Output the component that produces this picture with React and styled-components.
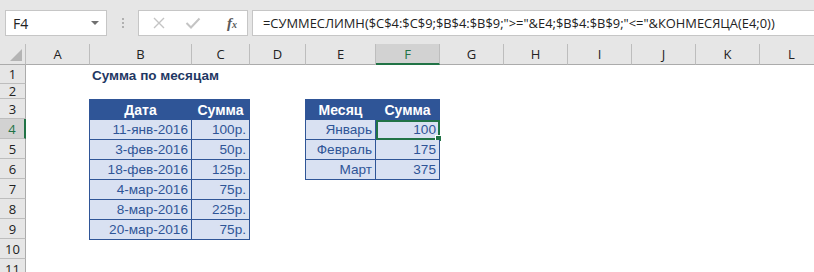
import React from "react";
import styled, { createGlobalStyle } from "styled-components";

const GlobalStyle = createGlobalStyle`
  html, body {
    margin: 0;
    padding: 0;
    background: #ffffff;
  }
`;

const columns = [
  { name: "A", width: 64 },
  { name: "B", width: 102 },
  { name: "C", width: 58 },
  { name: "D", width: 56 },
  { name: "E", width: 70 },
  { name: "F", width: 64 },
  { name: "G", width: 64 },
  { name: "H", width: 64 },
  { name: "I", width: 64 },
  { name: "J", width: 64 },
  { name: "K", width: 64 },
  { name: "L", width: 64 },
];

const rowHeights = [19, 15, 20, 20, 20, 20, 20, 20, 20, 20, 20];

const dates = [
  ["11-янв-2016", "100р."],
  ["3-фев-2016", "50р."],
  ["18-фев-2016", "125р."],
  ["4-мар-2016", "75р."],
  ["8-мар-2016", "225р."],
  ["20-мар-2016", "75р."],
];

const months = [
  ["Январь", "100"],
  ["Февраль", "175"],
  ["Март", "375"],
];

const formula =
  '=СУММЕСЛИМН($C$4:$C$9;$B$4:$B$9;">="&E4;$B$4:$B$9;"<="&КОНМЕСЯЦА(E4;0))';

export default function App() {
  return (
    <Page>
      <GlobalStyle />
      <Toolbar>
        <NameBox>
          <span>F4</span>
          <DropTriangle />
        </NameBox>
        <Grip>
          <i />
          <i />
          <i />
        </Grip>
        <ButtonBox>
          <IconSlot>
            <svg width="14" height="14" viewBox="0 0 14 14">
              <path d="M2 2 L12 12 M12 2 L2 12" stroke="#c4c4c4" strokeWidth="1.4" fill="none" />
            </svg>
          </IconSlot>
          <IconSlot>
            <svg width="16" height="14" viewBox="0 0 16 14">
              <path d="M1.5 7 L6 11.5 L14.5 2.5" stroke="#c4c4c4" strokeWidth="2" fill="none" />
            </svg>
          </IconSlot>
          <FxLabel>
            f<sub>x</sub>
          </FxLabel>
        </ButtonBox>
        <FormulaBar>{formula}</FormulaBar>
      </Toolbar>

      <Sheet $cols={columns.map((c) => c.width)} $rows={rowHeights}>
        <Corner>
          <CornerTriangle />
        </Corner>
        {columns.map((c) => (
          <ColHeader key={c.name} $active={c.name === "F"}>
            {c.name}
          </ColHeader>
        ))}
        {rowHeights.map((h, i) => (
          <RowHeader key={i} style={{ gridRow: i + 2 }} $active={i + 1 === 4}>
            {i + 1}
          </RowHeader>
        ))}

        <Title>Сумма по месяцам</Title>

        <Table $col="3 / 5" $row="4 / 11" $widths="102px 58px">
          <HeadCell>Дата</HeadCell>
          <HeadCell>Сумма</HeadCell>
          {dates.map(([d, s]) => (
            <React.Fragment key={d}>
              <Cell>{d}</Cell>
              <Cell>{s}</Cell>
            </React.Fragment>
          ))}
        </Table>

        <Table $col="6 / 8" $row="4 / 8" $widths="70px 64px">
          <HeadCell>Месяц</HeadCell>
          <HeadCell>Сумма</HeadCell>
          {months.map(([m, s]) => (
            <React.Fragment key={m}>
              <Cell>{m}</Cell>
              <Cell $selected={m === "Январь"}>
                {s}
                {m === "Январь" && <FillHandle />}
              </Cell>
            </React.Fragment>
          ))}
        </Table>
      </Sheet>
    </Page>
  );
}

const Page = styled.div`
  width: 814px;
  height: 272px;
  overflow: hidden;
  background: #ffffff;
`;

const Toolbar = styled.div`
  height: 44px;
  display: flex;
  align-items: flex-start;
  padding: 10px 0 0 5px;
  box-sizing: border-box;
  background: #e6e6e6;
`;

const NameBox = styled.div`
  width: 102px;
  height: 26px;
  display: flex;
  align-items: center;
  justify-content: space-between;
  padding: 0 7px 0 7px;
  box-sizing: border-box;
  background: #ffffff;
  border: 1px solid #c6c6c6;

  font-family: "Open Sans", "Noto Sans", sans-serif;
  font-size: 14px;
  color: #222222;
`;

const DropTriangle = styled.div`
  width: 0;
  height: 0;
  border-left: 4px solid transparent;
  border-right: 4px solid transparent;
  border-top: 4px solid #707070;
`;

const Grip = styled.div`
  width: 31px;
  height: 26px;
  display: flex;
  flex-direction: column;
  align-items: center;
  justify-content: center;
  gap: 2px;

  & > i {
    width: 2px;
    height: 2px;
    background: #b0b0b0;
  }
`;

const ButtonBox = styled.div`
  width: 110px;
  height: 26px;
  display: flex;
  align-items: center;
  justify-content: space-between;
  padding: 0 10px 0 12px;
  box-sizing: border-box;
  background: #ffffff;
  border: 1px solid #c6c6c6;

  & > :nth-child(2) {
    margin-right: 8px;
  }
`;

const IconSlot = styled.div`
  width: 16px;
  height: 16px;
  display: flex;
  align-items: center;
  justify-content: center;
`;

const FxLabel = styled.div`
  font-family: "Liberation Serif", serif;
  font-style: italic;
  font-weight: bold;
  font-size: 15px;
  color: #5a5a5a;
  line-height: 1;

  & sub {
    font-size: 10px;
    vertical-align: baseline;
  }
`;

const FormulaBar = styled.div`
  flex: 1;
  height: 26px;
  margin-left: 4px;
  display: flex;
  align-items: center;
  padding-left: 10px;
  box-sizing: border-box;
  white-space: nowrap;
  overflow: hidden;
  background: #ffffff;
  border: 1px solid #c6c6c6;
  border-right: none;

  font-family: "Open Sans", "Noto Sans", sans-serif;
  font-size: 12.9px;
  color: #222222;
`;

const Sheet = styled.div`
  display: grid;
  grid-template-columns: 26px ${(p) => p.$cols.map((w) => w + "px").join(" ")};
  grid-template-rows: 21px ${(p) => p.$rows.map((h) => h + "px").join(" ")};
  font-family: "Liberation Sans", "Noto Sans", sans-serif;
`;

const Corner = styled.div`
  position: relative;
  background: #e6e6e6;
  border-right: 1px solid #bdbdbd;
  border-bottom: 1px solid #ababab;
  box-sizing: border-box;
`;

const CornerTriangle = styled.div`
  position: absolute;
  right: 3px;
  bottom: 3px;
  width: 0;
  height: 0;
  border-left: 12px solid transparent;
  border-bottom: 12px solid #b4b4b4;
`;

const ColHeader = styled.div`
  display: flex;
  align-items: center;
  justify-content: center;
  box-sizing: border-box;
  background: ${(p) => (p.$active ? "#d2d2d2" : "#e6e6e6")};
  border-right: 1px solid #bdbdbd;
  border-bottom: ${(p) => (p.$active ? "2px solid #217346" : "1px solid #ababab")};
  padding-top: ${(p) => (p.$active ? "1px" : "0")};

  font-family: "Open Sans", "Noto Sans", sans-serif;
  font-size: 13px;
  color: ${(p) => (p.$active ? "#217346" : "#222222")};
`;

const RowHeader = styled.div`
  grid-column: 1;
  display: flex;
  align-items: center;
  justify-content: center;
  box-sizing: border-box;
  background: ${(p) => (p.$active ? "#d2d2d2" : "#e6e6e6")};
  border-right: ${(p) => (p.$active ? "2px solid #217346" : "1px solid #ababab")};
  border-bottom: 1px solid #bdbdbd;

  font-family: "Open Sans", "Noto Sans", sans-serif;
  font-size: 13px;
  color: ${(p) => (p.$active ? "#217346" : "#222222")};
`;

const Title = styled.div`
  grid-column: 3 / 6;
  grid-row: 2;
  display: flex;
  align-items: flex-end;
  padding: 0 0 1px 2px;
  white-space: nowrap;

  font-size: 13.5px;
  font-weight: bold;
  color: #1f3864;
`;

const Table = styled.div`
  grid-column: ${(p) => p.$col};
  grid-row: ${(p) => p.$row};
  display: grid;
  grid-template-columns: ${(p) => p.$widths};
  grid-auto-rows: 20px;
  align-self: start;
  border-left: 1px solid #2f5597;
  border-top: 1px solid #2f5597;
  box-sizing: border-box;
  margin-left: -1px;
`;

const HeadCell = styled.div`
  display: flex;
  align-items: center;
  justify-content: center;
  box-sizing: border-box;
  background: #2f5597;
  border-right: 1px solid #2f5597;
  border-bottom: 1px solid #2f5597;

  font-size: 14px;
  font-weight: bold;
  color: #ffffff;
`;

const Cell = styled.div`
  position: relative;
  display: flex;
  align-items: center;
  justify-content: flex-end;
  padding-right: 3px;
  box-sizing: border-box;
  background: #d9e1f2;
  border-right: 1px solid #2f5597;
  border-bottom: 1px solid #2f5597;

  font-size: 13.6px;
  color: #2f5597;

  ${(p) =>
    p.$selected &&
    `
    outline: 2px solid #217346;
    outline-offset: -2px;
  `}
`;

const FillHandle = styled.div`
  position: absolute;
  right: -3px;
  bottom: -3px;
  width: 5px;
  height: 5px;
  background: #217346;
  border: 1px solid #ffffff;
`;
